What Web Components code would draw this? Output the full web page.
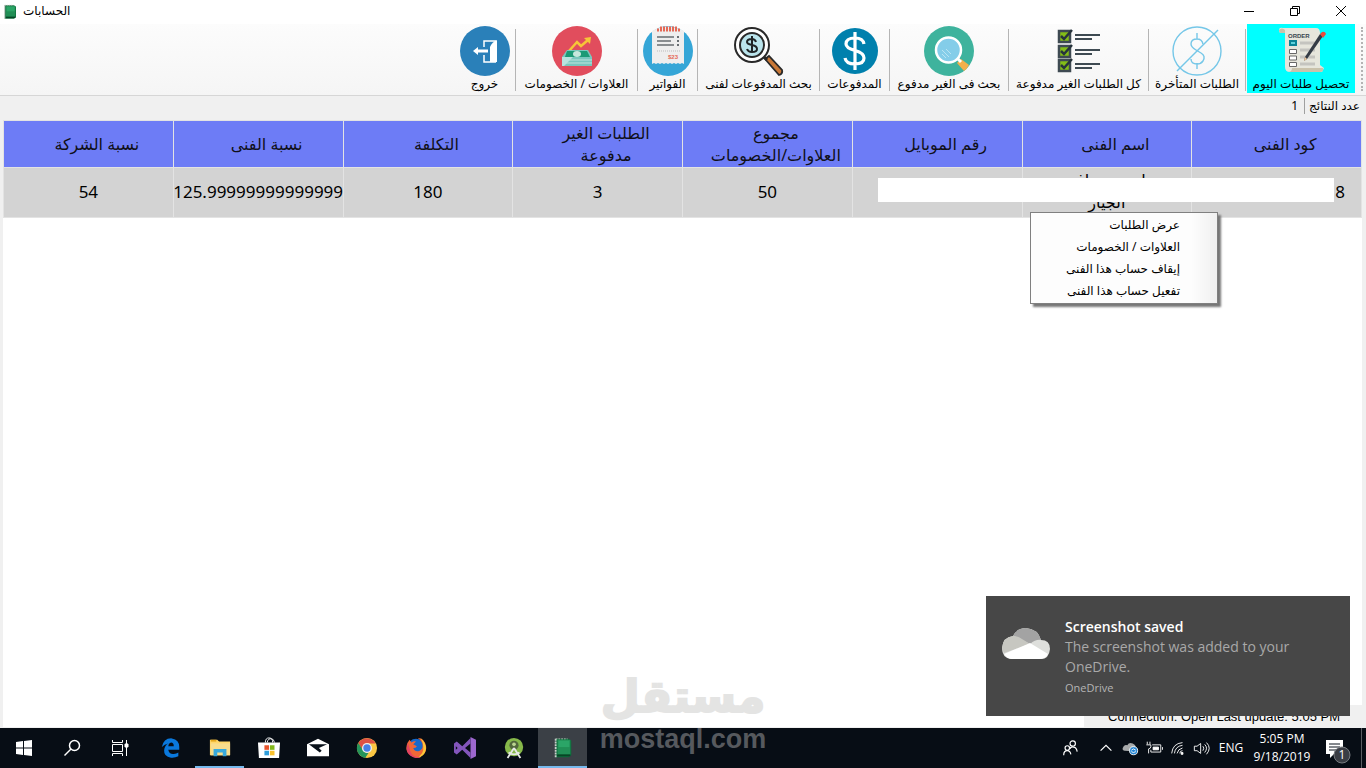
<!DOCTYPE html>
<html lang="ar">
<head>
<meta charset="utf-8">
<title>الحسابات</title>
<style>
    html,body{
        height:100%;
        margin:0;
    }
    body{
        overflow:hidden;
        background:#f0f0f0;
        color:#000;
        font-family:"Noto Sans","DejaVu Sans",sans-serif;
        font-size:12px;
    }
</style>
</head>
<body>
<accounts-app></accounts-app>

<script>
const icons = {
    app:`<svg viewBox="0 0 24 24"><path d="M4 2h14l3 2v16l-3 2H4z" fill="#0c6b3b"/><path d="M6 3h14v16H6z" fill="#218f56"/><path d="M7 4h12v7H7z" fill="#2ba567"/><path d="M6 19h14v2H5z" fill="#074525"/><path d="M4 2v20" stroke="#c9cfcb" stroke-width="2" stroke-dasharray="2 1"/><path d="M4 2h13" stroke="#aab5ae" stroke-dasharray="2 1"/></svg>`,
    order:`<svg viewBox="0 0 50 50"><path d="M3 4q0-3 4-2h33q4 0 4 5v32l4 3-2 4H14q-5 0-5-5V7H5q-2 0-2-3z" fill="#e6e6dc"/><path d="M3 4q3-3 6 0v3H5q-2 0-2-3zM16 42h31q1 4-3 4H12q4 0 4-4z" fill="#c9c2ab"/><text x="12" y="12" font-family="Liberation Sans" font-weight="bold" font-size="6" fill="#3a4650">ORDER</text><path d="M13 14h8v6h-8z" fill="#0b8596"/><path d="M15 16h4v2h-4z" fill="#5fd2da"/><path d="M13.500 23.500h7v4h-7zM13.500 30h7v4h-7zM13.500 36.500h7v4h-7z" fill="#fff" stroke="#686868"/><path d="M24 17h15M24 24h15M24 31h15M24 38h15" stroke="#c4c4bf" stroke-width="3"/><path d="M47 10 31 33l-3 2 1-4L44 8z" fill="#333b45"/><path d="m44 8 2-2q3-1 4 2l-3 4z" fill="#e84b3c"/><path d="m28 35 1-4 2 2z" fill="#f0c9a0"/></svg>`,
    late:`<svg viewBox="0 0 50 50" fill="none" stroke="#75c7e8" stroke-width="1.400"><circle cx="25" cy="25" r="24"/><path d="M46 4 5 45"/><path d="M25 7v6m0 24v6M31 18q-1-5-6-5-6 0-6 5 0 3 5 6l5 3q5 3 2 8-2 3-6 3-6 0-6-5"/></svg>`,
    checklist:`<svg viewBox="0 0 50 50"><path d="M5 5h11v11H5zM5 20h11v11H5zM5 34h11v11H5z" fill="#83bd17" stroke="#3e4a52" stroke-width="2.500"/><path d="m7 10 3 3 8-9M7 25l3 3 8-9M7 39l3 3 8-9" fill="none" stroke="#27343c" stroke-width="2.500"/><path d="M21 9h25M21 13h17M21 24h25M21 28h17M21 38h25M21 42h17" stroke="#3e4a52" stroke-width="2"/></svg>`,
    search:`<svg viewBox="0 0 50 50"><circle cx="25" cy="25" r="25" fill="#3eb39d"/><path d="m33 37 4-4 8 6q-2 4-5 6z" fill="#f2b04b"/><path d="m33 32 4 4" stroke="#fff" stroke-width="3"/><circle cx="24.500" cy="24" r="12.500" fill="#84cde9" stroke="#fff" stroke-width="2.500"/><path d="m18 24 7 7m-7-3 4 4m0-9 5 5" stroke="#b9e4f3"/></svg>`,
    dollar:`<svg viewBox="0 0 50 50"><circle cx="25" cy="25" r="23" fill="#0080ad"/><path d="M34 18q-1-6-9-6-9 0-9 6 0 4 9 6.500 9 2.500 9 7.500 0 6-9 6-9 0-10-6M25 6v38" fill="none" stroke="#fff" stroke-width="3.200"/></svg>`,
    payment:`<svg viewBox="0 0 50 50"><path d="m31 33 4-3 13 14q1 4-3 5z" fill="#c97837" stroke="#292929" stroke-width="1.800"/><path d="m29 30 4 4" stroke="#292929" stroke-width="3"/><circle cx="18" cy="19" r="17" fill="#fff" stroke="#292929" stroke-width="2"/><circle cx="18" cy="19" r="12" fill="#bae4ec" stroke="#292929" stroke-width="2"/><path d="M22 16q-1-3-4-3-5 0-5 3 0 2 5 3t5 4q0 3-5 3-4 0-5-3m5-13v16" fill="none" stroke="#202426" stroke-width="2"/></svg>`,
    invoice:`<svg viewBox="0 0 50 50"><circle cx="25" cy="25" r="25" fill="#35a6d7"/><path d="M9 5Q25-4 41 5v33l-2-1-2 1-2-1-2 1-2-1-2 1-2-1-2 1-2-1-2 1-2-1-2 1-2-1-2 1-2-1-2 1z" fill="#eee"/><path d="M14 4h23M17 2h17" stroke="#e56956" stroke-width="3" stroke-dasharray="2 1"/><path d="M14 11h17M14 15h14M14 19h17" stroke="#686e72" stroke-width="1.500"/><path d="M34 11h2M34 15h2M34 19h2" stroke="#686e72" stroke-width="2"/><path d="M14 25h23" stroke="#bbb" stroke-dasharray="1 1"/><text x="25" y="33" font-family="Liberation Sans" font-weight="bold" font-size="6" fill="#e56956">$23</text></svg>`,
    bonus:`<svg viewBox="0 0 50 50"><circle cx="25" cy="25" r="25" fill="#e14d5d"/><path d="m17 25 8-9 4 4 7-6" fill="none" stroke="#f6c638" stroke-width="2.500"/><path d="m32 12 7-1-1 7z" fill="#f6c638"/><path d="M15 24h21l4 7v9H10v-9z" fill="#79c7bd"/><path d="M15 25h20l3 6H13z" fill="#1b9a75"/><ellipse cx="25" cy="28" rx="4" ry="3" fill="#c6e8dd"/><path d="M11 34h29M11 37h29" stroke="#d1ece7" stroke-width=".800"/><path d="M10 31h11l-9 9h-2z" fill="#b9e3df"/></svg>`,
    exit:`<svg viewBox="0 0 50 50"><circle cx="25" cy="25" r="25" fill="#2a80b9"/><path d="M24 21v-6h12M24 29v7h12" fill="none" stroke="#fff" stroke-width="1.500"/><path d="M37 14v22h-7V21q2-5 7-7z" fill="#fff"/><path d="m13 25 5-4v2.500h10v3H18V29z" fill="#fff"/></svg>`,
    minimize:`<svg viewBox="0 0 12 12"><path d="M1 6.500h10" stroke="#000"/></svg>`,
    restore:`<svg viewBox="0 0 12 12" fill="none" stroke="#000"><path d="M1.500 3.500h7v7h-7zM3.500 3.500v-2h7v7h-2"/></svg>`,
    close:`<svg viewBox="0 0 12 12"><path d="m1 1 10 10M11 1 1 11" stroke="#000"/></svg>`,
    windows:`<svg viewBox="0 0 24 24" fill="#fff"><path d="m4 6 7-1v6.500H4zM12 5l8-1v7.500h-8zM4 12.500h7V19l-7-1zM12 12.500h8V20l-8-1z"/></svg>`,
    find:`<svg viewBox="0 0 24 24" fill="none" stroke="#fff" stroke-width="1.500"><circle cx="14.500" cy="9.500" r="5"/><path d="M11 13 4.500 19.500"/></svg>`,
    tasks:`<svg viewBox="0 0 24 24" fill="none" stroke="#fff"><path d="M4.500 8.500h10v7h-10zM4.500 4v2.500h10V4M4.500 20v-2.500h10V20M18.500 4v16"/><path d="M17 8h3v3h-3z" fill="#fff"/></svg>`,
    edge:`<svg viewBox="0 0 24 24"><path d="M2 11Q4 1 13 1.500q8 1 8 9.500v3H9q1 5 6 4.500 3 0 5-1.500v4q-4 2-8 1.500-8-1-7.500-8Q5 9 9 7q-4 .500-7 4zm7-1h6q0-4-3-4-3 1-3 4z" fill="#0a78dc"/></svg>`,
    folder:`<svg viewBox="0 0 24 24"><path d="M1 3h8l2 2h12v15H1z" fill="#ffd76b"/><path d="M2 3h6v2H2z" fill="#e6a91c"/><path d="M2 7h21v13H2z" fill="#f8dd8d"/><path d="M5 21v-8h14v8h-4v-4H9v4z" fill="#38a9dc"/></svg>`,
    store:`<svg viewBox="0 0 24 24"><path d="M8 6q0-5 4-5t4 5M10 6q1-5 5-4 2 0 3 4" fill="none" stroke="#fff"/><path d="M0 6h24l-1 17H1z" fill="#fff"/><path d="M7 9h5v5H7z" fill="#e8542d"/><path d="M13 9h5v5h-5z" fill="#83b81a"/><path d="M7 15h5v5H7z" fill="#2f9edb"/><path d="M13 15h5v5h-5z" fill="#fac22e"/></svg>`,
    mail:`<svg viewBox="0 0 24 24"><path d="M0 8 12 2l12 6v13H0z" fill="#fff"/><path d="m2 8 12 9 2-2-3-3 9-4z" fill="#09111a"/></svg>`,
    chrome:`<svg viewBox="0 0 24 24"><circle cx="12" cy="12" r="11" fill="#fbc743"/><path d="M2.500 6.500A11 11 0 0 1 21.500 7H12l-5 7z" fill="#df5145"/><path d="M2.500 6.500 8 15q2 3 6 2l-4 6A11 11 0 0 1 2.500 6.500z" fill="#25945a"/><circle cx="12" cy="12" r="5.500" fill="#eee"/><circle cx="12" cy="12" r="4" fill="#477fe7"/></svg>`,
    firefox:`<svg viewBox="0 0 24 24"><circle cx="12" cy="11" r="9" fill="#1669cb"/><path d="M3 6 5 3l2 3q3-2 5-1l-3 3 4 2q-1 2-4 2 2 5 7 3 4-2 3-7 0-3-5-7 7 0 9 9 1 8-6 11-7 3-12-2Q-1 14 3 6z" fill="#ef6736"/><path d="M17 1q6 5 6 12-2 9-10 10 8-5 7-12 0-5-3-10z" fill="#fbc737"/><path d="M3 6 2 13q0 6 7 9 5 2 8 0-9 0-11-6z" fill="#e34362"/></svg>`,
    studio:`<svg viewBox="0 0 24 24"><path d="m18 0 6 3v18l-6 3z" fill="#9c67ce"/><path fill-rule="evenodd" d="M0 7 3 5l6 5 9-9v22l-9-9-6 5-3-2zm2 3v4l2-2zm10 2 6 5V7z" fill="#8355bb"/></svg>`,
    android:`<svg viewBox="0 0 24 24"><circle cx="12" cy="11" r="10" fill="#86b84a"/><circle cx="12" cy="9" r="5" fill="#52673c"/><circle cx="12" cy="8" r="2" fill="#bcd591"/><path d="m12 12-7 11M12 12l7 11M6 17q6 4 12 0" fill="none" stroke="#e7e9e7" stroke-width="2"/></svg>`,
    people:`<svg viewBox="0 0 20 20" fill="none" stroke="#fff" stroke-width="1.300"><circle cx="13" cy="5" r="3"/><circle cx="7" cy="10" r="2.500"/><path d="M3 18q0-5 4-5 3 0 4 4M10 11q1-3 4-2 3 0 4 5"/></svg>`,
    chevron:`<svg viewBox="0 0 20 20"><path d="m4 13 6-6 6 6" fill="none" stroke="#fff" stroke-width="1.300"/></svg>`,
    sync:`<svg viewBox="0 0 20 20"><path d="M4 13q-4-1-1-5 2-2 4-1 2-4 6-2 3 1 4 5v4z" fill="#a7a9aa"/><circle cx="14" cy="13" r="4.500" fill="#2586d5" stroke="#fff"/><path d="M11.500 12.500q2-3 5 0m0 1.500q-3 2-5 0" stroke="#fff" fill="none"/></svg>`,
    battery:`<svg viewBox="0 0 20 20" fill="none" stroke="#fff"><path d="M8 6.500h9.500v8h-11V12M19.500 9v3M2.500 3v3m3-3v3M1.500 6.500h5v2q0 2-2.500 2.500v5"/><path d="M9 9h6v3H9z" fill="#fff"/></svg>`,
    wifi:`<svg viewBox="0 0 20 20" fill="none" stroke="#fff"><path d="M3 16Q4 5 15 4M6 16q1-8 9-9M9 16q1-5 6-6M12 16q0-3 3-3"/><path d="M13.500 15h2v2h-2z" fill="#fff"/></svg>`,
    volume:`<svg viewBox="0 0 20 20" fill="none" stroke="#fff"><path d="M1.500 8v5h3l4 3V5l-4 3zM11 8q2 2 0 5M13 6q4 4 0 9M15 4q6 6 0 13"/></svg>`,
    notice:`<svg viewBox="0 0 26 26"><path d="M1 2h17v14H9l-4 4v-4H1z" fill="#fff"/><path d="M4 6h11M4 9h11M4 12h11" stroke="#09111a"/><circle cx="17" cy="17" r="8" fill="#3a3d44" stroke="#777b80"/><text x="17" y="21" font-family="Open Sans" font-size="12" text-anchor="middle" fill="#fff">1</text></svg>`,
    cloud:`<svg viewBox="0 0 48 32"><path d="M9 31Q0 30 0 20q1-11 11-12 4-8 13-8 12 1 15 12 9 0 9 9-1 10-9 10z" fill="#dedfdc"/><path d="M11 8q4-8 13-8 12 1 15 12-5-1-11 4L18 11q-3-2-7-3z" fill="#a3a3a3"/><path d="M0 20q1-11 11-12 5 0 9 3l8 5-26 9q-2-3-2-5z" fill="#c7c7c1"/><path d="m2 26 26-11 18 11q-2 5-9 5H10q-5 0-8-5z" fill="#fff"/></svg>`
}

class UiIcon extends HTMLElement{
    constructor(){
        super()
        this.attachShadow({mode:"open"})
    }
    connectedCallback(){
        this.shadowRoot.innerHTML = `
            <style>
                :host{display:block;flex:none;width:24px;height:24px;direction:ltr}
                svg{display:block;width:100%;height:100%}
            </style>
            ${icons[this.getAttribute("name")]}
        `
    }
}
customElements.define("ui-icon",UiIcon)

class TitleBar extends HTMLElement{
    constructor(){
        super()
        this.attachShadow({mode:"open"})
    }
    connectedCallback(){
        this.shadowRoot.innerHTML = `
            <style>
                :host{display:flex;align-items:center;height:24px;background:#fff;padding:0 2px}
                .logo{width:16px;height:16px}
                h1{flex:1;margin:0 0 0 5px;padding-bottom:2px;font-size:12px;line-height:16px;font-weight:400}
                button{display:grid;place-items:center;width:46px;height:22px;border:0;padding:0 0 2px;background:none}
                button ui-icon{width:12px;height:12px}
            </style>
            <ui-icon class="logo" name="app"></ui-icon>
            <h1><slot></slot></h1>
            <button aria-label="تصغير"><ui-icon name="minimize"></ui-icon></button>
            <button aria-label="استعادة"><ui-icon name="restore"></ui-icon></button>
            <button aria-label="إغلاق"><ui-icon name="close"></ui-icon></button>
        `
    }
}
customElements.define("title-bar",TitleBar)

class ToolButton extends HTMLElement{
    constructor(){
        super()
        this.attachShadow({mode:"open"})
    }
    connectedCallback(){
        this.shadowRoot.innerHTML = `
            <style>
                :host{display:flex;position:relative}
                :host([line])::after{content:"";position:absolute;left:0;top:5px;height:62px;border-left:1px solid #b5b5b5}
                button{flex:1;display:flex;flex-direction:column;align-items:center;height:69px;margin:0 1px 0 2px;border:0;padding:2px 0 0;background:none;font:inherit;color:#000;white-space:nowrap}
                :host([active]) button{background:#0ff}
                ui-icon{width:50px;height:50px}
                span{line-height:16px}
            </style>
            <button><ui-icon name="${this.getAttribute("icon")}"></ui-icon><span><slot></slot></span></button>
        `
    }
}
customElements.define("tool-button",ToolButton)

class ToolBar extends HTMLElement{
    constructor(){
        super()
        this.attachShadow({mode:"open"})
    }
    connectedCallback(){
        this.shadowRoot.innerHTML = `
            <style>
                :host{display:grid;direction:rtl;grid-template-columns:10px 111px 97px 140px 119px 70px 122px 60px 122px 62px;height:71px;border-bottom:1px solid #d6d6d6;background:linear-gradient(#fcfcfc,#f5f5f5)}
                i{justify-self:start;margin:3px 3px 0 0;height:64px;border-right:2px dotted #b4b4b4}
            </style>
            <i></i><slot></slot>
        `
    }
}
customElements.define("tool-bar",ToolBar)

class ResultCount extends HTMLElement{
    constructor(){
        super()
        this.attachShadow({mode:"open"})
    }
    connectedCallback(){
        this.shadowRoot.innerHTML = `
            <style>
                :host{display:flex;direction:rtl;align-items:center;height:20px;padding:0 6px 4px;line-height:16px}
                output{border-right:1px solid #a0a0a0;margin-right:4px;padding-right:6px}
            </style>
            <label for="total"><slot></slot></label><output id="total">${this.getAttribute("total")}</output>
        `
    }
}
customElements.define("result-count",ResultCount)

class AccountsTable extends HTMLElement{
    constructor(){
        super()
        this.attachShadow({mode:"open"})
    }
    connectedCallback(){
        this.shadowRoot.innerHTML = `
            <style>
                :host{display:block;position:relative;direction:rtl}
                table{width:100%;table-layout:fixed;border-collapse:collapse;font-size:17px}
                th,td{border:1px solid #e3e3e3;box-sizing:border-box;text-align:center;overflow:hidden;white-space:nowrap}
                th{height:47px;padding:0 0 0 17px;background:#6d7cf6;color:#101018;font-size:16px;font-weight:400;line-height:22px}
                td{height:50px;padding:0 0 2px;background:#d3d3d3}
                td.code{text-align:right;padding-right:16px}
                td.long div{display:flex;justify-content:center}
                td.name{font-size:16px;line-height:22px}
                .name div{height:46px;overflow:hidden}
                .name p{display:flex;justify-content:center;gap:52px;margin:0}
                .cover{position:absolute;top:58px;right:28px;width:456px;height:24px;background:#fff}
            </style>
            <table>
                <thead><tr>
                    <th>كود الفنى</th>
                    <th>اسم الفنى</th>
                    <th>رقم الموبايل</th>
                    <th>مجموع<br>العلاوات/الخصومات</th>
                    <th>الطلبات الغير<br>مدفوعة</th>
                    <th>التكلفة</th>
                    <th>نسبة الفنى</th>
                    <th>نسبة الشركة</th>
                </tr></thead>
                <tbody><tr>
                    <td class="code">8</td>
                    <td class="name"><div><p><span>ا</span><span>اف</span></p>الجيار</div></td>
                    <td></td>
                    <td>50</td>
                    <td>3</td>
                    <td>180</td>
                    <td class="long"><div>125.99999999999999</div></td>
                    <td>54</td>
                </tr></tbody>
            </table>
            <div class="cover"></div>
        `
    }
}
customElements.define("accounts-table",AccountsTable)

class ContextMenu extends HTMLElement{
    constructor(){
        super()
        this.attachShadow({mode:"open"})
    }
    connectedCallback(){
        this.shadowRoot.innerHTML = `
            <style>
                :host{display:flex;flex-direction:column;direction:rtl;box-sizing:border-box;width:188px;padding:1px;border:1px solid #808080;background:linear-gradient(to left,#f0f0f0,#fdfdfd 26px);box-shadow:3px 3px 2px #777}
                ::slotted(button){height:22px;border:0;padding:0 36px 2px 0;background:none;font:inherit;color:#000;text-align:right}
            </style>
            <slot></slot>
        `
    }
}
customElements.define("context-menu",ContextMenu)

class SavedToast extends HTMLElement{
    constructor(){
        super()
        this.attachShadow({mode:"open"})
    }
    connectedCallback(){
        this.shadowRoot.innerHTML = `
            <style>
                :host{display:flex;gap:15px;box-sizing:border-box;width:364px;height:120px;padding:21px 16px;background:#474747;color:#a9a9a9;font:14px/20px "Open Sans",sans-serif}
                ui-icon{width:48px;height:32px;margin-top:11px}
                h2,p{margin:0;font-size:14px}
                h2{color:#fff;font-weight:600}
                p{width:240px}
                small{display:block;font-size:11px;line-height:22px;color:#b5b5b5}
            </style>
            <ui-icon name="cloud"></ui-icon>
            <div><h2>Screenshot saved</h2><p><slot></slot></p><small>OneDrive</small></div>
        `
    }
}
customElements.define("saved-toast",SavedToast)

class TaskBar extends HTMLElement{
    constructor(){
        super()
        this.attachShadow({mode:"open"})
    }
    connectedCallback(){
        const apps = ["edge","folder","store","mail","chrome","firefox","studio","android","app"]
        const tray = ["chevron","sync","battery","wifi","volume"]
        this.shadowRoot.innerHTML = `
            <style>
                :host{display:flex;height:40px;background:#070d15;color:#fff;font:12px/18px "Open Sans",sans-serif}
                button{display:grid;place-items:center;width:48px;border:0;padding:0;background:none;color:inherit;font:inherit}
                nav{display:flex;margin-left:2px}
                nav button{width:49px}
                nav ui-icon{width:22px;height:22px}
                button.folder{box-shadow:inset 0 -2px #76b9ed}
                button.app{background:#3b4046;box-shadow:inset 0 -2px #76b9ed}
                .tray{display:flex;margin-left:auto}
                .tray button{width:24px}
                .tray ui-icon{width:18px;height:18px}
                .tray .people{width:48px}
                .tray .lang{width:34px}
                .tray .clock{display:block;width:68px;text-align:center}
                .tray .notice{width:46px;padding-right:2px;border-right:1px solid #5a5e63;margin-right:4px}
                .notice ui-icon{width:26px;height:26px;margin-top:6px}
            </style>
            <button aria-label="Start"><ui-icon name="windows"></ui-icon></button>
            <button aria-label="Search"><ui-icon name="find"></ui-icon></button>
            <button aria-label="Task view"><ui-icon name="tasks"></ui-icon></button>
            <nav>${apps.map(a => `<button class="${a}" aria-label="${a}"><ui-icon name="${a}"></ui-icon></button>`).join("")}</nav>
            <div class="tray">
                <button class="people" aria-label="People"><ui-icon name="people"></ui-icon></button>
                ${tray.map(t => `<button aria-label="${t}"><ui-icon name="${t}"></ui-icon></button>`).join("")}
                <button class="lang">ENG</button>
                <button class="clock">5:05 PM<br>9/18/2019</button>
                <button class="notice" aria-label="Notifications"><ui-icon name="notice"></ui-icon></button>
            </div>
        `
    }
}
customElements.define("task-bar",TaskBar)

class WaterMark extends HTMLElement{
    constructor(){
        super()
        this.attachShadow({mode:"open"})
    }
    connectedCallback(){
        this.shadowRoot.innerHTML = `
            <style>
                :host{display:block;text-align:center;pointer-events:none;white-space:nowrap}
                b{display:block}
                .ar{font:bold 45px/56px "DejaVu Sans",sans-serif;color:#e4e4e3;-webkit-text-stroke:2px #e4e4e3}
                .en{font:bold 27px/28px "Liberation Sans",sans-serif;color:#56595e}
            </style>
            <b class="ar" dir="rtl">مستقل</b>
            <b class="en">mostaql.com</b>
        `
    }
}
customElements.define("water-mark",WaterMark)

class AccountsApp extends HTMLElement{
    constructor(){
        super()
        this.attachShadow({mode:"open"})
    }
    connectedCallback(){
        this.shadowRoot.innerHTML = `
            <style>
                :host{display:flex;flex-direction:column;height:100vh;position:relative}
                main{flex:1;display:flex;flex-direction:column;margin:0 4px 0 3px;background:#fff;border-bottom:1px solid #f0f0f0}
                footer{margin:auto -4px 0 auto;box-sizing:border-box;width:282px;height:22px;padding:0 24px;background:#f0f0f0;font:13px/24px "Liberation Sans",sans-serif;white-space:nowrap}
                context-menu{position:absolute;top:212px;right:148px}
                saved-toast{position:absolute;right:16px;bottom:52px}
                water-mark{position:absolute;left:50%;bottom:15px;transform:translateX(-50%)}
            </style>
            <title-bar>الحسابات</title-bar>
            <tool-bar>
                <tool-button icon="order" active line>تحصيل طلبات اليوم</tool-button>
                <tool-button icon="late" line>الطلبات المتأخرة</tool-button>
                <tool-button icon="checklist" line>كل الطلبات الغير مدفوعة</tool-button>
                <tool-button icon="search" line>بحث فى الغير مدفوع</tool-button>
                <tool-button icon="dollar" line>المدفوعات</tool-button>
                <tool-button icon="payment" line>بحث المدفوعات لفنى</tool-button>
                <tool-button icon="invoice" line>الفواتير</tool-button>
                <tool-button icon="bonus" line>العلاوات / الخصومات</tool-button>
                <tool-button icon="exit">خروج</tool-button>
            </tool-bar>
            <result-count total="1">عدد النتائج</result-count>
            <main>
                <accounts-table></accounts-table>
                <footer>Connection: Open Last update: 5:05 PM</footer>
            </main>
            <task-bar></task-bar>
            <context-menu>
                <button>عرض الطلبات</button>
                <button>العلاوات / الخصومات</button>
                <button>إيقاف حساب هذا الفنى</button>
                <button>تفعيل حساب هذا الفنى</button>
            </context-menu>
            <saved-toast>The screenshot was added to your OneDrive.</saved-toast>
            <water-mark></water-mark>
        `
    }
}
customElements.define("accounts-app",AccountsApp)
</script>
</body>
</html>
